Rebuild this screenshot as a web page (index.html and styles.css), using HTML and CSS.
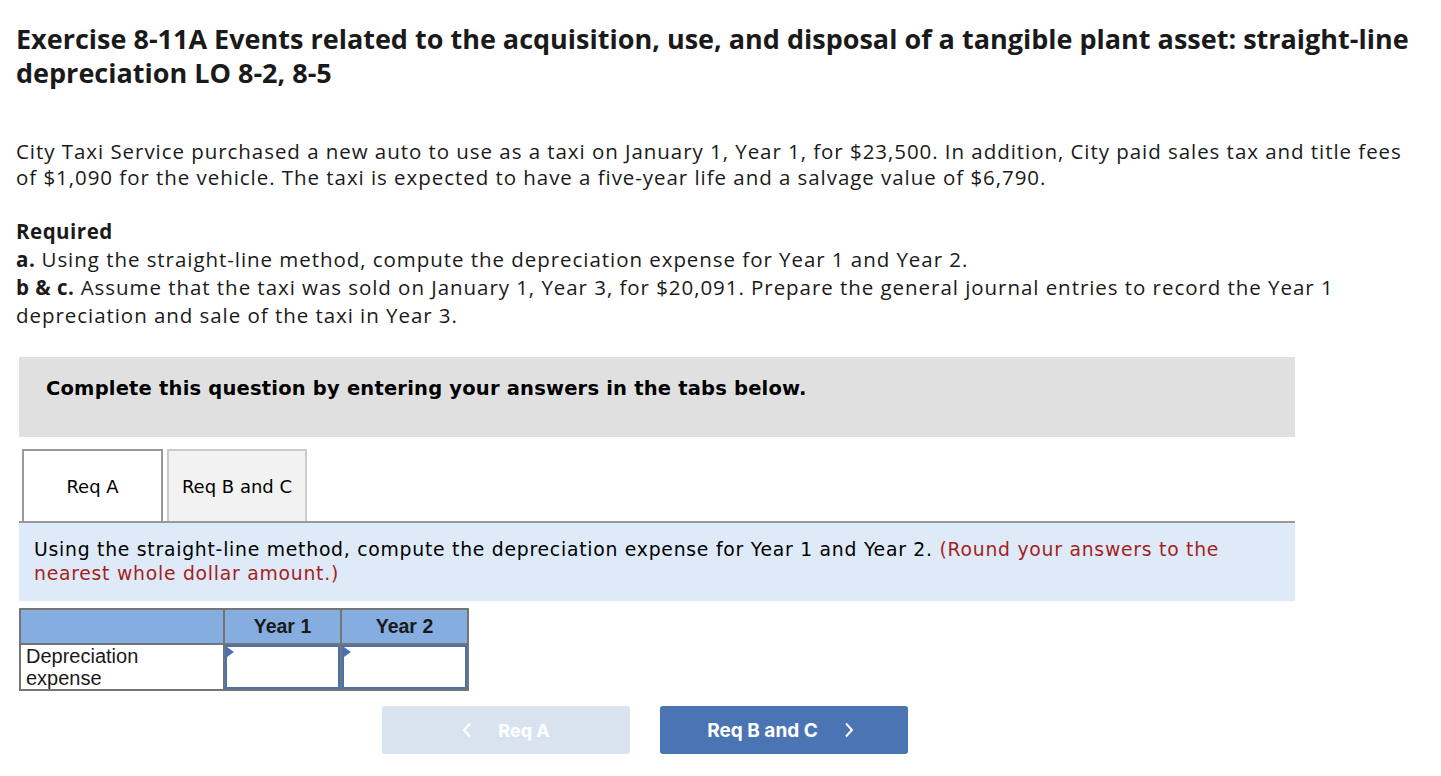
FILE: index.html
```html
<!DOCTYPE html>
<html>
<head>
<meta charset="utf-8">
<link rel="stylesheet" href="styles.css">
</head>
<body>
<div class="page">
  <h1 class="title">Exercise 8-11A Events related to the acquisition, use, and disposal of a tangible plant asset: straight-line depreciation LO 8-2, 8-5</h1>
  <p class="intro">City Taxi Service purchased a new auto to use as a taxi on January 1, Year 1, for $23,500. In addition, City paid sales tax and title fees of $1,090 for the vehicle. The taxi is expected to have a five-year life and a salvage value of $6,790.</p>
  <div class="required">
    <div class="req-head">Required</div>
    <div><b>a.</b> Using the straight-line method, compute the depreciation expense for Year 1 and Year 2.</div>
    <div><b>b &amp; c.</b> Assume that the taxi was sold on January 1, Year 3, for $20,091. Prepare the general journal entries to record the Year 1 depreciation and sale of the taxi in Year 3.</div>
  </div>

  <div class="widget">
    <div class="banner">Complete this question by entering your answers in the tabs below.</div>
    <div class="tabs">
      <div class="tab active">Req A</div>
      <div class="tab">Req B and C</div>
    </div>
    <div class="instr">Using the straight-line method, compute the depreciation expense for Year 1 and Year 2. <span class="red">(Round your answers to the nearest whole dollar amount.)</span></div>

    <table class="grid">
      <tr class="hdr">
        <th class="c-label"></th>
        <th class="c-val">Year 1</th>
        <th class="c-val2">Year 2</th>
      </tr>
      <tr>
        <td class="label">Depreciation<br>expense</td>
        <td class="input"><span class="flag"></span></td>
        <td class="input"><span class="flag"></span></td>
      </tr>
    </table>

    <div class="nav">
      <div class="btn prev">
        <svg class="chev" width="10" height="16" viewBox="0 0 10 16"><path d="M8 1.5 L2 8 L8 14.5" fill="none" stroke="#fff" stroke-width="2"/></svg>
        <span>Req A</span>
      </div>
      <div class="btn next">
        <span>Req B and C</span>
        <svg class="chev" width="10" height="16" viewBox="0 0 10 16"><path d="M2 1.5 L8 8 L2 14.5" fill="none" stroke="#fff" stroke-width="2"/></svg>
      </div>
    </div>
  </div>
</div>
</body>
</html>
```

FILE: styles.css
```css
* { box-sizing: border-box; }
body {
  margin: 0;
  background: #fff;
  color: #1a1a1a;
  font-family: "Open Sans", "Liberation Sans", sans-serif;
}
.page {
  padding: 22px 16px 0 16px;
}
.title {
  margin: 0;
  font-size: 27px;
  line-height: 34px;
  font-weight: 700;
  color: #1a1a1a;
  max-width: 1400px;
}
.intro {
  margin: 48px 0 0 0;
  font-size: 20.5px;
  line-height: 26px;
  letter-spacing: 0.95px;
  max-width: 1405px;
}
.required {
  margin-top: 27px;
  font-size: 20.5px;
  line-height: 28px;
  letter-spacing: 0.95px;
  max-width: 1405px;
}
.required b, .req-head { font-weight: 700; letter-spacing: 0.5px; }
.widget {
  margin-top: 28px;
  padding-left: 3px;
  width: 1279px;
  font-family: "DejaVu Sans", Verdana, sans-serif;
}
.banner {
  background: #e0e0e0;
  height: 80px;
  padding: 20px 0 0 27px;
  font-size: 19.5px;
  letter-spacing: 0.2px;
  font-weight: 700;
  color: #000;
}
.tabs {
  display: flex;
  gap: 4px;
  margin-top: 12px;
  padding-left: 3px;
  border-bottom: 2px solid #999;
}
.tab {
  width: 140px;
  height: 72px;
  display: flex;
  align-items: center;
  justify-content: center;
  font-size: 18px;
  color: #000;
  background: #f2f2f2;
  border: 2px solid #cacaca;
  border-bottom: none;
}
.tab.active {
  background: #fff;
  border-color: #999;
  width: 141px;
}
.instr {
  background: #deeaf7;
  height: 78px;
  padding: 15px 15px 0 15px;
  font-size: 18.8px;
  letter-spacing: 0.75px;
  line-height: 24px;
  color: #000;
}
.red { color: #a61e1e; }
.grid {
  margin-top: 7px;
  border-collapse: collapse;
  font-family: "Liberation Sans", Arial, sans-serif;
  border: 2px solid #757575;
}
.grid th {
  background: #85ade0;
  height: 35px;
  font-size: 19.5px;
  font-weight: 700;
  color: #1a1a1a;
  border: 2px solid #757575;
  padding: 0;
}
.c-label { width: 204px; }
.c-val { width: 117px; }
.c-val2 { width: 127px; }
.grid td {
  border: 2px solid #757575;
  height: 46px;
  padding: 0;
}
.grid td.label {
  font-size: 20px;
  line-height: 22px;
  padding: 0 5px;
  color: #1a1a1a;
}
.grid td.input {
  position: relative;
  box-shadow: inset 0 0 0 2px #4a72b0;
}
.flag {
  position: absolute;
  left: 2px;
  top: 2px;
  width: 0;
  height: 0;
  border-top: 5px solid transparent;
  border-bottom: 5px solid transparent;
  border-left: 7px solid #4a72b0;
}
.nav {
  display: flex;
  gap: 30px;
  margin-top: 15px;
  padding-left: 363px;
  font-family: "Inter", "Lato", sans-serif;
}
.btn {
  width: 248px;
  height: 48px;
  border-radius: 3px;
  display: flex;
  align-items: center;
  justify-content: center;
  font-size: 19px;
  font-weight: 700;
  color: #fff;
}
.prev { background: #d9e3ef; gap: 26px; font-size: 18px; }
.next { background: #4a74b3; gap: 26px; padding-right: 7px; }
.chev { display: block; }
```
